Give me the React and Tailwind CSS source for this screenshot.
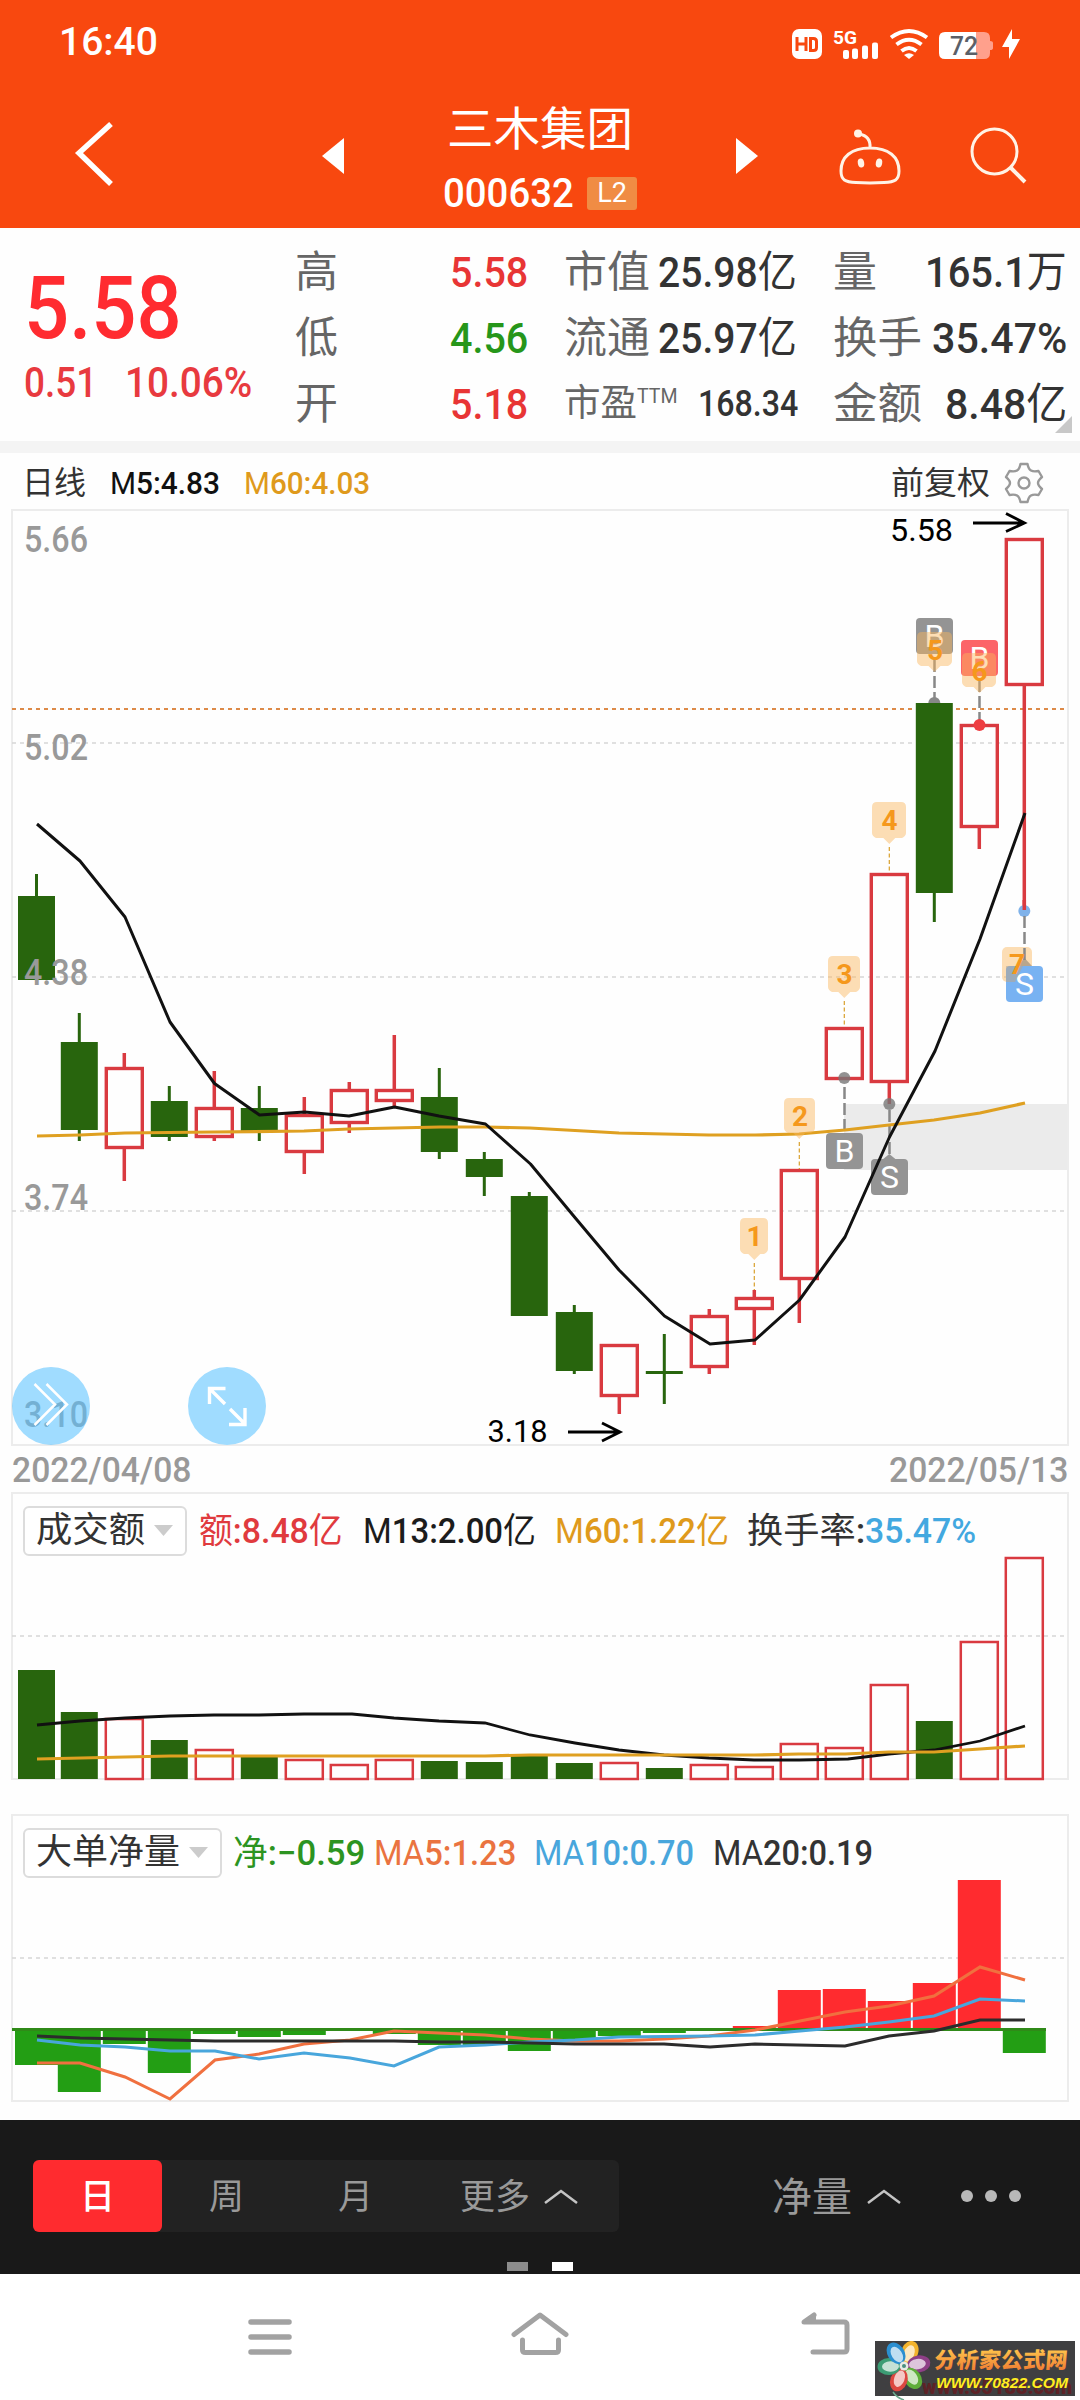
import React, { useLayoutEffect, useRef, useState } from 'react';
import clsx from 'clsx';

const FIRST_X = 36.5;
const STEP = 45;
const GREEN = '#28650d';
const RED = '#d93a40';

// first candle sits slightly closer to the frame than the others
const cx = (i) => (i === 0 ? FIRST_X : 79.3 + STEP * (i - 1));

// [up, high, bodyTop, bodyBottom, low]
const CANDLES = [
    [0, 874, 896, 980, 980],
    [0, 1013, 1042, 1130, 1141],
    [1, 1053, 1067, 1149, 1181],
    [0, 1086, 1101, 1137, 1141],
    [1, 1071, 1107, 1138, 1141],
    [0, 1086, 1108, 1132, 1141],
    [1, 1097, 1114, 1153, 1174],
    [1, 1082, 1089, 1124, 1133],
    [1, 1035, 1089, 1102, 1107],
    [0, 1068, 1097, 1152, 1159],
    [0, 1152, 1159, 1177, 1196],
    [0, 1192, 1196, 1316, 1316],
    [0, 1305, 1312, 1371, 1374],
    [1, 1344, 1344, 1397, 1414],
    [0, 1334, 1371, 1374, 1404],
    [1, 1309, 1315, 1368, 1374],
    [1, 1290, 1297, 1310, 1345],
    [1, 1169, 1169, 1280, 1323],
    [1, 1027, 1027, 1080, 1080],
    [1, 873, 873, 1083, 1104],
    [0, 703, 703, 893, 922],
    [1, 724, 724, 828, 849],
    [1, 538, 538, 686, 910],
];

const VOLUMES = [1670, 1712, 1718, 1740, 1749, 1757, 1759, 1764, 1759, 1761, 1762, 1756, 1763, 1762, 1768, 1764, 1766, 1743, 1747, 1684, 1721, 1641, 1557];

const NET = [2065, 2092, 2044, 2073, 2034, 2037, 2035, 2031, 2034, 2045, 2045, 2051, 2040, 2036, 2033, 2031, 2026, 1990, 1989, 2001, 1983, 1880, 2053];

const PRICE_MA5 = '37,824 80,861 125,917 170,1022 214.5,1083.5 259.5,1115 304.5,1112 349,1116 394.5,1107 439,1116 485.5,1124 530.5,1164 574.5,1217 619,1270 664.5,1316 710,1344 755,1340 799.5,1300 845,1237 889.5,1137 935,1051 980,939 1025,813';
const PRICE_MA60 = '37,1136 80,1135 125,1133 214,1132 304,1131 349,1129 394,1128 440,1127 485,1127 530,1128 575,1130.5 619,1133 709,1135 755,1135 799,1134 845,1130 889,1125 934,1120 980,1113 1025,1103';
const VOL_M13 = '37,1725 80,1721 125,1718 170,1716 214,1715 259,1715 304,1714 352,1714 394,1718 439,1721 485,1723 530,1735 575,1743 619,1750 664,1755 709,1758 754,1760 799,1760 848,1759 889,1754 934,1750 980,1741 1025,1726';
const VOL_M60 = '37,1759 125,1757 170,1756 485,1756 530,1755 754,1755 799,1754 845,1754 889,1752 934,1752 980,1749 1025,1746';
const NET_MA5 = '37,2063 80,2063 125,2077 170,2099 215,2060 259,2054 304,2044 350,2040 394,2031 439,2033 485,2035 530,2039 575,2041 619,2041 664,2039 709,2036 755,2030 800,2021 845,2012 889,2006 934,1996 980,1967 1025,1980';
const NET_MA10 = '37,2040 80,2045 125,2047 170,2051 215,2051 259,2059 304,2053 350,2058 394,2066 439,2047 485,2045 530,2042 575,2040 619,2037 709,2036 755,2035 800,2031 845,2027 889,2022 934,2016 980,1999 1025,2001';
const NET_MA20 = '37,2036 80,2038 125,2039 215,2041 394,2041 439,2042 485,2042 575,2044 664,2044 710,2047 755,2044 845,2046 889,2036 934,2031 980,2020 1025,2020';

// [n, x, y, width, height, tip x, line end]
const COUNT_TAGS = [
    [1, 740, 1218, 28, 36, 754.3, 1290],
    [2, 784, 1098, 31, 35, 799.3, 1169],
    [3, 828, 956, 32, 36, 844.3, 1027],
    [4, 872, 802, 34, 36, 889.3, 873],
];

// Squeezes its text horizontally so it fills exactly the given width
function Fit({ className, children }) {
    const box = useRef(null);
    const text = useRef(null);
    const [scale, setScale] = useState(1);

    useLayoutEffect(() => {
        setScale(box.current.clientWidth / text.current.offsetWidth);
    }, []);

    return (
        <span ref={box} className={clsx('block shrink-0 whitespace-nowrap', className)}>
            <span ref={text} className="inline-block origin-left" style={{ transform: `scaleX(${scale})` }}>
                {String(children).split(/([\d.:%−/]+)/).map((part, i) => (
                    <span key={i} className={i % 2 ? 'font-medium' : 'font-normal'}>{part}</span>
                ))}
            </span>
        </span>
    );
}

function StatusIcons() {
    return (
        <svg className="h-[40px] w-[240px]" viewBox="785 20 240 40" fill="#fff">
            <rect x="792" y="27" width="30" height="30" rx="7" />
            <path d="M797 35v14M806 35v14M797 42h9M810.500 36.500h3q3 0 3 3v6q0 3-3 3h-3z" fill="none" stroke="#f8480f" strokeWidth="3" />
            <text x="833" y="41.500" fontSize="19" fontWeight="700" textLength="24" lengthAdjust="spacingAndGlyphs">5G</text>
            <rect x="843" y="48" width="6" height="9" rx="2" />
            <rect x="852" y="46.500" width="6" height="10.500" rx="2" />
            <rect x="862" y="43.500" width="6" height="13.500" rx="2" />
            <rect x="872" y="40.500" width="6" height="16.500" rx="2" />
            <g fill="none" stroke="#fff" strokeWidth="4">
                <path d="M891 35.500q18-13 36 0" />
                <path d="M896.500 42.500q12.500-9.500 25 0" />
                <path d="M901.500 49q7.500-6 15 0" />
            </g>
            <path d="M909 57l-5-4q5-3.500 10 0z" />
            <path d="M976 30h8q6 0 6 6v3q3 0 3 2v5q0 2-3 2v3q0 6-6 6h-8z" fill="#ffa08c" />
            <path d="M945 30h31v27h-31q-6 0-6-6v-15q0-6 6-6z" />
            <text x="950" y="53" fontSize="25" fontWeight="500" fill="#5b6068" textLength="28" lengthAdjust="spacingAndGlyphs">72</text>
            <path d="M1012 27l-10 18h7v12l11-20h-8z" />
        </svg>
    );
}

function Header() {
    return (
        <header className="h-[228px] bg-[#f8480f] text-white">
            <div className="flex h-[84px] items-center justify-between pl-[59px] pr-[55px]">
                <Fit className="w-[99px] text-[39px]">16:40</Fit>
                <StatusIcons />
            </div>
            <div className="flex h-[144px] pl-[74px] pr-[52px]">
                <svg className="mt-[34px] h-[70px] w-[40px]" viewBox="74 118 40 70" fill="none" stroke="#fff" strokeWidth="5.500">
                    <path d="M111 124L79 153l32 31" />
                </svg>
                <svg className="ml-[208px] mt-[54px] h-[36px] w-[22px]" viewBox="0 0 22 36" fill="#fff"><path d="M22 0v36L0 18z" /></svg>
                <div className="ml-[99px] flex w-[198px] flex-col">
                    <Fit className="ml-[4px] mt-[13px] w-[186px] text-[46px] leading-[64px]">三木集团</Fit>
                    <div className="mt-[12px] flex items-center gap-[13px]">
                        <Fit className="w-[131px] text-[41px] leading-[40px]">000632</Fit>
                        <span className="flex h-[33px] w-[50px] items-center justify-center rounded-[3px] bg-[#f08c44] text-[27px]">L2</span>
                    </div>
                </div>
                <svg className="ml-[95px] mt-[54px] h-[36px] w-[22px]" viewBox="0 0 22 36" fill="#fff"><path d="M0 0v36l22-18z" /></svg>
                <svg className="ml-[80px] mt-[44px] h-[60px] w-[64px]" viewBox="838 128 64 60" fill="none" stroke="#fff3e6" strokeWidth="3">
                    <path d="M870 148C889 148 899 157 899 171C899 180 895 182 884 182.500C875 183 865 183 856 182.500C845 182 841 180 841 171C841 157 851 148 870 148zM870 148q1-12-11-14" />
                    <circle cx="858" cy="133.500" r="4" fill="#fff3e6" stroke="none" />
                    <ellipse cx="861" cy="163" rx="3.200" ry="4.500" fill="#fff3e6" stroke="none" transform="rotate(-10 861 163)" />
                    <ellipse cx="879" cy="163" rx="3.200" ry="4.500" fill="#fff3e6" stroke="none" transform="rotate(10 879 163)" />
                </svg>
                <svg className="ml-[66px] mt-[42px] h-[60px] w-[60px]" viewBox="968 126 60 60" fill="none" stroke="#fff3e6" strokeWidth="3">
                    <circle cx="994.500" cy="151.500" r="22.500" />
                    <path d="M1010 167l15 15" strokeWidth="4" />
                </svg>
            </div>
        </header>
    );
}

function Quote() {
    return (
        <section className="relative flex h-[213px] pl-[24px] text-[43px] text-[#333]">
            <div className="w-[271px] text-[#e83a3f]">
                <Fit className="mt-[36px] w-[158px] text-[88px] leading-[88px] text-[#ff2b30]">5.58</Fit>
                <div className="mt-[8px] flex gap-[28px] leading-[44px]">
                    <Fit className="w-[73px]">0.51</Fit>
                    <Fit className="w-[127px]">10.06%</Fit>
                </div>
            </div>
            <div className="mt-[11px] flex w-[233px] flex-col leading-[66px]">
                {[['高', '5.58', 'text-[#e83535]'], ['低', '4.56', 'text-[#26961a]'], ['开', '5.18', 'text-[#e83535]']].map(([label, value, color]) => (
                    <div key={label} className="flex h-[66px] justify-between">
                        <span className="text-[#666]">{label}</span>
                        <Fit className={clsx('w-[78px]', color)}>{value}</Fit>
                    </div>
                ))}
            </div>
            <div className="ml-[36px] mt-[11px] w-[233px] leading-[66px]">
                {[['市值', '25.98亿'], ['流通', '25.97亿']].map(([label, value]) => (
                    <div key={label} className="flex h-[66px] justify-between">
                        <Fit className="w-[86px] text-[#666]">{label}</Fit>
                        <Fit className="w-[139px]">{value}</Fit>
                    </div>
                ))}
                <div className="flex h-[66px] items-center text-[37px]">
                    <Fit className="w-[73px] text-[#666]">市盈</Fit>
                    <Fit className="-mt-[16px] w-[41px] text-[21px] text-[#666]">TTM</Fit>
                    <Fit className="ml-[20px] w-[100px]">168.34</Fit>
                </div>
            </div>
            <div className="ml-[36px] mt-[11px] w-[234px] leading-[66px]">
                <div className="flex h-[66px] justify-between">
                    <Fit className="w-[44px] text-[#666]">量</Fit>
                    <Fit className="w-[142px]">165.1万</Fit>
                </div>
                <div className="flex h-[66px] justify-between">
                    <Fit className="w-[89px] text-[#666]">换手</Fit>
                    <Fit className="w-[135px]">35.47%</Fit>
                </div>
                <div className="flex h-[66px] justify-between">
                    <Fit className="w-[89px] text-[#666]">金额</Fit>
                    <Fit className="w-[122px]">8.48亿</Fit>
                </div>
            </div>
            <svg className="absolute bottom-[8px] right-[8px] size-[17px]" viewBox="0 0 17 17" fill="#c8c8c8"><path d="M17 0v17H0z" /></svg>
        </section>
    );
}

function SignalTag({ x, y, letter, color, line }) {
    return (
        <g>
            <path d={`M${x} ${line[0]}V${line[1]}`} stroke="#888" strokeWidth="2.500" strokeDasharray="12 4" />
            <rect x={x - 18.500} y={y} width="37" height="36" rx="4" fill={color} />
            <text x={x} y={y + 29} fontSize="32" fill="#fff" textAnchor="middle">{letter}</text>
        </g>
    );
}

function CountTag({ n, x, y, w, h, tip, end }) {
    const b = y + h;
    return (
        <g>
            <path d={`M${x + 5} ${y}h${w - 10}q5 0 5 5V${b - 5}q0 3-4 5H${tip + 6}L${tip} ${b + 6}L${tip - 6} ${b}H${x + 4}q-4-2-4-5V${y + 5}q0-5 5-5z`} fill="#fbb55a" opacity=".45" />
            {end && <path d={`M${tip} ${b + 9}V${end}`} stroke="#d9a02c" strokeWidth="1.200" strokeDasharray="4 2.500" />}
            <text x={x + w / 2 + 0.5} y={y + 28} fontSize="28" fontWeight="700" fill="#f5981c" textAnchor="middle">{n}</text>
        </g>
    );
}

function PriceChart() {
    return (
        <svg className="block h-[937px] w-full" viewBox="0 509 1080 937" fill="none">
            <path d="M12 510H1068V1445H12z" stroke="#ececec" strokeWidth="2" />
            <rect x="844" y="1104" width="223" height="66" fill="#ebebeb" />
            <path d="M12 743H1066M12 977H1066M12 1211H1066" stroke="#d6d6d6" strokeWidth="1.500" strokeDasharray="4 4" />
            <path d="M12 709H1066" stroke="#dd8a48" strokeWidth="2" strokeDasharray="4 4" />

            <circle cx="934.300" cy="703" r="6" fill="#888" />
            {CANDLES.map(([up, high, top, bottom, low], i) => (
                <g key={i}>
                    <path d={`M${cx(i)} ${high}V${top}M${cx(i)} ${bottom}V${low}`} stroke={up ? RED : GREEN} strokeWidth={up ? 3.500 : 3} />
                    {up
                        ? <rect x={cx(i) - 18} y={top + 1.500} width="36" height={bottom - top - 3} stroke={RED} strokeWidth="3.400" />
                        : <rect x={cx(i) - 18.500} y={top} width="37" height={bottom - top} fill={GREEN} />}
                </g>
            ))}

            <circle cx="844.300" cy="1078" r="6" fill="#777" opacity=".8" />
            <circle cx="889.300" cy="1104" r="6" fill="#777" opacity=".8" />
            <SignalTag x={844.500} y={1133} letter="B" color="#949494" line={[1087, 1133]} />
            <path d="M882 1160l7.300-6 7.300 6z" fill="#949494" />
            <SignalTag x={889.500} y={1159} letter="S" color="#949494" line={[1110, 1156]} />

            <polyline points={PRICE_MA60} stroke="#dfa021" strokeWidth="3.200" />
            <polyline points={PRICE_MA5} stroke="#111" strokeWidth="3" strokeLinejoin="round" />

            {COUNT_TAGS.map(([n, x, y, w, h, tip, end]) => (
                <CountTag key={n} n={n} x={x} y={y} w={w} h={h} tip={tip} end={end} />
            ))}
            <SignalTag x={934.500} y={618} letter="B" color="#949494" line={[660, 703]} />
            <CountTag n={5} x={917} y={632} w={35} h={34} tip={934.500} />
            <SignalTag x={979.500} y={640} letter="B" color="#fc6468" line={[680, 724]} />
            <circle cx="979.500" cy="725" r="6" fill="#ee3d41" />
            <CountTag n={6} x={962} y={653} w={34} h={34} tip={979.500} />
            <circle cx="1024.300" cy="911" r="6" fill="#7fb2ea" />
            <path d="M1024.300 900v10" stroke={RED} strokeWidth="3.500" />
            <rect x="1002" y="947" width="30" height="35" rx="5" fill="#fbb55a" opacity=".45" />
            <path d="M1017 966l7.500-8 7.500 8z" fill="#b9a68c" />
            <SignalTag x={1024.500} y={966} letter="S" color="#78b2f2" line={[916, 960]} />
            <path d="M1006 966h17l-8 16h-9z" fill="#b9a68c" opacity=".55" />
            <text x="1009" y="974" fontSize="28" fontWeight="700" fill="#f5981c">7</text>

            <g stroke="#000" strokeWidth="2.800">
                <path d="M973 523h51M1006 513.500l18.500 9.500-18.500 8.500" />
                <path d="M568 1432h51M602 1423l18 9-18 9" />
            </g>
            <g fontSize="31" fill="#000">
                <text x="890" y="541" textLength="63" lengthAdjust="spacingAndGlyphs">5.58</text>
                <text x="487.500" y="1442" textLength="60" lengthAdjust="spacingAndGlyphs">3.18</text>
            </g>
            <g fontSize="36" fontWeight="500" fill="#999">
                {[['5.66', 552], ['5.02', 760], ['4.38', 985], ['3.74', 1210], ['3.10', 1427]].map(([label, y]) => (
                    <text key={label} x="24" y={y} textLength="64" lengthAdjust="spacingAndGlyphs">{label}</text>
                ))}
            </g>

            {/* floating shortcuts */}
            <circle cx="51" cy="1406" r="39" fill="#58c1ff" opacity=".57" />
            <circle cx="227" cy="1406" r="39" fill="#a0dcff" />
            <path d="M34.500 1384L55 1404.500 34.500 1425M46.500 1384L67 1404.500 46.500 1425" stroke="#fff" strokeWidth="2.500" />
            <path d="M225.500 1388.500H209.500V1404M210 1389l15 15M229 1424.500h16V1408M230 1409l15 15" stroke="#fff" strokeWidth="3.400" />
        </svg>
    );
}

function Select({ className, children }) {
    return (
        <div className="flex h-[50px] items-center gap-[9px] rounded-[6px] border-2 border-[#dcdcdc] bg-white pl-[11px] pr-[12px]">
            <Fit className={className}>{children}</Fit>
            <svg className="h-[11px] w-[19px]" viewBox="0 0 19 11" fill="#ccc"><path d="M0 0h19l-9.500 11z" /></svg>
        </div>
    );
}

function VolumePanel() {
    return (
        <section className="relative h-[322px]">
            <svg className="absolute inset-0 h-full w-full" viewBox="0 1492 1080 322" fill="none">
                <path d="M12 1493H1068V1779H12z" stroke="#ececec" strokeWidth="2" />
                <path d="M12 1636H1066" stroke="#d6d6d6" strokeWidth="1.500" strokeDasharray="4 4" />
                {VOLUMES.map((top, i) => (CANDLES[i][0]
                    ? <rect key={i} x={cx(i) - 18.500} y={top + 1} width="37" height={1778 - top} stroke={RED} strokeWidth="2.500" />
                    : <rect key={i} x={cx(i) - 18.500} y={top} width="37" height={1779 - top} fill={GREEN} />
                ))}
                <polyline points={VOL_M13} stroke="#111" strokeWidth="2.800" />
                <polyline points={VOL_M60} stroke="#dfa021" strokeWidth="3.200" />
            </svg>
            <div className="relative flex items-center pl-[23px] pt-[12px] text-[35px] leading-[50px]">
                <Select className="w-[109px] text-[#333]">成交额</Select>
                <Fit className="ml-[12px] mt-[3px] w-[144px] text-[#e03a3e]">额:8.48亿</Fit>
                <Fit className="ml-[20px] mt-[3px] w-[173px] text-[#1c1c1c]">M13:2.00亿</Fit>
                <Fit className="ml-[19px] mt-[3px] w-[174px] text-[#df9a1c]">M60:1.22亿</Fit>
                <Fit className="ml-[18px] mt-[3px] w-[118px] text-[#333]">换手率:</Fit>
                <Fit className="mt-[3px] w-[111px] text-[#42a8e0]">35.47%</Fit>
            </div>
        </section>
    );
}

function NetPanel() {
    return (
        <section className="relative h-[306px]">
            <svg className="absolute inset-0 h-full w-full" viewBox="0 1814 1080 306" fill="none">
                <path d="M12 1815H1068V2101H12z" stroke="#ececec" strokeWidth="2" />
                <path d="M12 1958H1066" stroke="#d6d6d6" strokeWidth="1.500" strokeDasharray="4 4" />
                {NET.map((y, i) => (y > 2029
                    ? <rect key={i} x={cx(i) - 21.500} y="2029" width="43" height={y - 2029} fill="#239e14" />
                    : <rect key={i} x={cx(i) - 21.500} y={y} width="43" height={2029 - y} fill="#ff2b2f" />
                ))}
                <path d="M12 2029.500H1046" stroke="#2f8a18" strokeWidth="3.200" />
                <polyline points={NET_MA5} stroke="#f0703f" strokeWidth="3" />
                <polyline points={NET_MA10} stroke="#48a6dc" strokeWidth="3" />
                <polyline points={NET_MA20} stroke="#2c2c2c" strokeWidth="3" />
            </svg>
            <div className="relative flex items-center pl-[23px] pt-[12px] text-[35px] leading-[50px]">
                <Select className="w-[144px] text-[#333]">大单净量</Select>
                <Fit className="ml-[11px] mt-[3px] w-[132px] text-[#2c9421]">净:−0.59</Fit>
                <Fit className="ml-[9px] mt-[3px] w-[142px] text-[#ea7340]">MA5:1.23</Fit>
                <Fit className="ml-[18px] mt-[3px] w-[160px] text-[#48a6dc]">MA10:0.70</Fit>
                <Fit className="ml-[19px] mt-[3px] w-[160px] text-[#333]">MA20:0.19</Fit>
            </div>
        </section>
    );
}

function Caret() {
    return (
        <svg className="h-[17px] w-[34px]" viewBox="0 0 34 17" fill="none" stroke="#c4c4c4" strokeWidth="2.500">
            <path d="M1 15L17 3l16 12" />
        </svg>
    );
}

function PeriodBar() {
    return (
        <section className="flex h-[154px] flex-col bg-[#191919] pt-[40px] text-[35px] text-[#999]">
            <div className="flex items-center pl-[33px]">
                <div className="flex h-[72px] w-[586px] items-center rounded-[6px] bg-[#222]">
                    <span className="flex h-full w-[129px] items-center justify-center rounded-[6px] bg-[#ff2b2f] pt-[4px] font-medium text-white">日</span>
                    <span className="w-[129px] pt-[4px] text-center">周</span>
                    <span className="w-[129px] pt-[4px] text-center">月</span>
                    <div className="flex items-center gap-[14px] pl-[40px]">
                        <span className="pt-[4px]">更多</span>
                        <Caret />
                    </div>
                </div>
                <div className="ml-[153px] flex items-center gap-[15px] text-[40px]">
                    <span className="pt-[4px]">净量</span>
                    <Caret />
                </div>
                <div className="ml-[60px] flex gap-[12px]">
                    <i className="size-[12px] rounded-full bg-[#b8b8b8]" />
                    <i className="size-[12px] rounded-full bg-[#b8b8b8]" />
                    <i className="size-[12px] rounded-full bg-[#b8b8b8]" />
                </div>
            </div>
            <div className="mt-[30px] flex justify-center gap-[24px]">
                <i className="h-[9px] w-[21px] bg-[#8c8c8c]" />
                <i className="h-[9px] w-[21px] bg-white" />
            </div>
        </section>
    );
}

const PETALS = [
    ['#f3b32c', 22], ['#8e3f86', 82], ['#5fae3a', 145], ['#dc4740', 200], ['#3c9c74', 268], ['#2b8fd0', 328],
];

function Watermark() {
    return (
        <svg className="absolute bottom-0 right-[5px] h-[59px] w-[200px]" viewBox="875 2341 200 59">
            <defs>
                <linearGradient id="gold" x1="0" y1="0" x2="0" y2="1">
                    <stop offset="0" stopColor="#ffc94d" />
                    <stop offset="1" stopColor="#ef7430" />
                </linearGradient>
            </defs>
            <rect x="875" y="2341" width="200" height="55" fill="#3f3f41" />
            <text x="922" y="2394" fontSize="20" fontWeight="900" fill="#5e2226" textLength="150" lengthAdjust="spacingAndGlyphs">www.55188.com</text>
            <path d="M893 2392q4 6 11 8" stroke="#6aa88c" strokeWidth="1.500" fill="none" />
            {PETALS.map(([color, angle]) => (
                <g key={angle} transform={`translate(904 2366) rotate(${angle})`}>
                    <ellipse cx="0" cy="-15" rx="8.500" ry="11.500" fill={color} />
                    <ellipse cx="0" cy="-13.500" rx="5.200" ry="8.500" fill="#fff" opacity=".7" />
                </g>
            ))}
            <circle cx="904" cy="2366" r="4.500" fill="#e8ebe4" />
            <circle cx="904" cy="2366" r="2" fill="#4a8f80" />
            <text x="935" y="2368" fontSize="22" fontWeight="900" fill="url(#gold)" textLength="133" lengthAdjust="spacingAndGlyphs" transform="translate(206 0) skewX(-5)">分析家公式网</text>
            <text x="936" y="2388" fontSize="15.500" fontWeight="700" fontStyle="italic" fill="#ffee20" fontFamily="Liberation Sans" textLength="132" lengthAdjust="spacingAndGlyphs">WWW.70822.COM</text>
        </svg>
    );
}

function SystemNav() {
    return (
        <nav className="relative flex h-[126px] items-start bg-white pl-[248px] pt-[38px]">
            <svg className="h-[44px] w-[44px]" viewBox="248 2312 44 44" stroke="#a2a2a2" strokeWidth="5.500" strokeLinecap="round" fill="none">
                <path d="M251 2322h38M251 2337h38M251 2352h38" />
            </svg>
            <svg className="ml-[216px] h-[44px] w-[64px]" viewBox="508 2312 64 44" stroke="#a2a2a2" strokeWidth="5" strokeLinecap="round" strokeLinejoin="round" fill="none">
                <path d="M514 2334.500L540 2315l26 19.500M522.500 2340v10q0 2.500 3 2.500h30q3 0 3-2.500v-10" />
            </svg>
            <svg className="ml-[228px] h-[44px] w-[52px]" viewBox="800 2312 52 44" stroke="#a2a2a2" strokeWidth="5" strokeLinecap="round" strokeLinejoin="round" fill="none">
                <path d="M813 2352h31q3 0 3-3v-24q0-3-3-3h-40L814 2315" />
                <path d="M804 2322l12-8v8z" fill="#a2a2a2" stroke="none" />
            </svg>
            <Watermark />
        </nav>
    );
}

export default function App() {
    return (
        <main className="h-[2400px] w-[1080px] overflow-hidden bg-[#fefefe] font-[Roboto,'Noto_Sans_CJK_SC',sans-serif]">
            <Header />
            <Quote />
            <div className="h-[12px] bg-[#f4f4f4]" />
            <div className="flex h-[56px] items-center pl-[22px] pr-[35px] pt-[4px] text-[32px]">
                <Fit className="w-[64px] text-[#333]">日线</Fit>
                <Fit className="ml-[24px] w-[110px] text-[#111]">M5:4.83</Fit>
                <Fit className="ml-[24px] w-[126px] text-[#df9a1c]">M60:4.03</Fit>
                <Fit className="ml-auto w-[99px] text-[#333]">前复权</Fit>
                <svg className="ml-[13px] h-[42px] w-[42px]" viewBox="0 0 42 42" fill="none" stroke="#999" strokeWidth="2.400" strokeLinejoin="round">
                    <path d="M17.500 2h7q1 5 3.500 6.500t7.500.500l3.500 6q-4 3.500-4 6t4 6l-3.500 6q-5-1-7.500.500t-3.500 6.500h-7q-1-5-3.500-6.500t-7.500-.500l-3.500-6q4-3.500 4-6t-4-6l3.500-6q5 1 7.500-.500t3.500-6.500z" />
                    <circle cx="21" cy="21" r="5.500" />
                </svg>
            </div>
            <PriceChart />
            <div className="flex h-[46px] items-center justify-between px-[12px] pt-[4px] text-[35px] text-[#999]">
                <Fit className="w-[179px]">2022/04/08</Fit>
                <Fit className="w-[179px]">2022/05/13</Fit>
            </div>
            <VolumePanel />
            <NetPanel />
            <PeriodBar />
            <SystemNav />
        </main>
    );
}
